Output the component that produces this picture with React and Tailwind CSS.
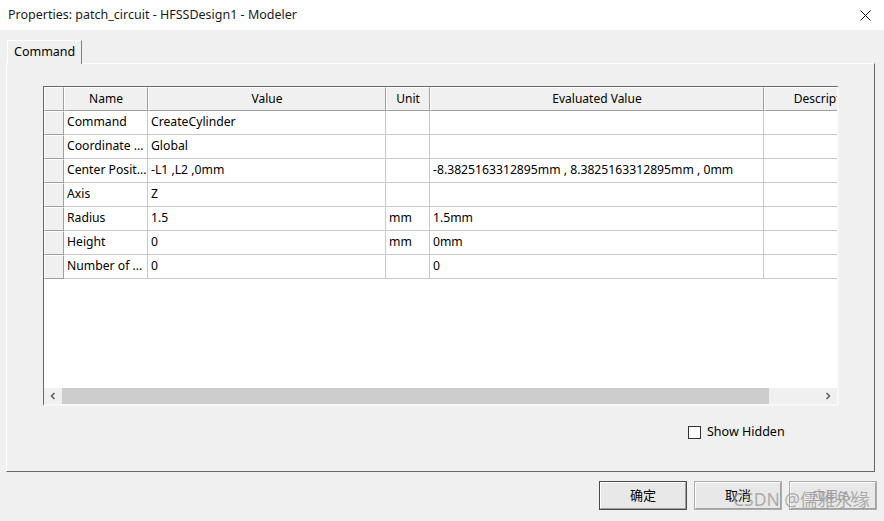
import React from "react";

const cols = [
  { key: "h", w: 20 },
  { key: "name", w: 84, label: "Name" },
  { key: "value", w: 238, label: "Value" },
  { key: "unit", w: 44, label: "Unit" },
  { key: "eval", w: 334, label: "Evaluated Value" },
  { key: "desc", w: 124, label: "Description" },
];

const rows = [
  { name: "Command", value: "CreateCylinder", unit: "", eval: "" },
  { name: "Coordinate ...", value: "Global", unit: "", eval: "" },
  {
    name: "Center Posit...",
    value: "-L1 ,L2 ,0mm",
    unit: "",
    eval: "-8.3825163312895mm , 8.3825163312895mm , 0mm",
  },
  { name: "Axis", value: "Z", unit: "", eval: "" },
  { name: "Radius", value: "1.5", unit: "mm", eval: "1.5mm" },
  { name: "Height", value: "0", unit: "mm", eval: "0mm" },
  { name: "Number of ...", value: "0", unit: "", eval: "0" },
];

function Chevron({ dir }) {
  return (
    <svg width="8" height="8" viewBox="0 0 8 8">
      {dir === "left" ? (
        <path d="M5.5 1 L2.5 4 L5.5 7" fill="none" stroke="#606060" strokeWidth="1.6" />
      ) : (
        <path d="M2.5 1 L5.5 4 L2.5 7" fill="none" stroke="#606060" strokeWidth="1.6" />
      )}
    </svg>
  );
}

function Button({ children, primary, disabled }) {
  return (
    <div
      className={`w-[88px] h-[29px] ${primary ? "border border-[#4a4a4a]" : "border border-[#adadad]"} bg-[#e8e8e8]`}
    >
      <div className="w-full h-full border-t border-l border-white border-r border-b border-r-[#a0a0a0] border-b-[#a0a0a0] flex items-center justify-center">
        <span className={`text-[13px] ${disabled ? "text-[#a0a0a0]" : "text-black"}`}>{children}</span>
      </div>
    </div>
  );
}

export default function App() {
  return (
    <div
      className="relative w-[884px] h-[521px] bg-[#f0f0f0] flex flex-col overflow-hidden text-black"
      style={{ fontFamily: '"Noto Sans", "Noto Sans CJK SC", sans-serif' }}
    >
      {/* Title bar */}
      <div className="h-[30px] bg-white flex items-center justify-between pl-[8px] pr-[13px] shrink-0">
        <span className="text-[12.5px] leading-none text-[#1a1a1a]">
          Properties: patch_circuit - HFSSDesign1 - Modeler
        </span>
        <svg width="11" height="11" viewBox="0 0 11 11">
          <path d="M0.5 0.5 L10.5 10.5 M10.5 0.5 L0.5 10.5" stroke="#111" strokeWidth="1" />
        </svg>
      </div>

      {/* Tab strip */}
      <div className="pl-[7px] pt-[10px] shrink-0">
        <div className="w-[75px] h-[24px] border-t border-l border-white border-r border-r-[#808080] flex items-center pl-[6px] relative z-10 -mb-[1px] bg-[#f0f0f0]">
          <span className="text-[12.5px] leading-none">Command</span>
        </div>
      </div>

      {/* Panel */}
      <div className="ml-[6px] w-[869px] h-[409px] border-t border-l border-white border-r border-b border-r-[#696969] border-b-[#696969] shrink-0 flex flex-col pl-[36px] pt-[22px]">
        {/* Grid box */}
        <div className="w-[796px] h-[320px] border-t border-l border-[#696969] border-r-2 border-b-2 border-r-[#f8f8f8] border-b-[#f8f8f8] flex flex-col">
          <div className="flex-1 bg-white overflow-hidden">
            <div className="flex w-max h-[24px]">
              {cols.map((c) => (
                <div
                  key={c.key}
                  style={{ width: c.w }}
                  className="shrink-0 h-full bg-[#f0f0f0] border-t border-l border-white border-r border-b border-r-[#a0a0a0] border-b-[#a0a0a0] flex items-center justify-center overflow-hidden"
                >
                  <span className="text-[12px] leading-none whitespace-nowrap">{c.label}</span>
                </div>
              ))}
            </div>
            {rows.map((r) => (
              <div key={r.name} className="flex w-max h-[24px]">
                {cols.map((c) =>
                  c.key === "h" ? (
                    <div
                      key={c.key}
                      style={{ width: c.w }}
                      className="shrink-0 h-full bg-[#f0f0f0] border-t border-l border-white border-r border-b border-r-[#a0a0a0] border-b-[#a0a0a0]"
                    />
                  ) : (
                    <div
                      key={c.key}
                      style={{ width: c.w }}
                      className="shrink-0 h-full border-r border-b border-[#c8c8c8] flex items-center pl-[3px] overflow-hidden"
                    >
                      <span className="text-[12.2px] leading-none whitespace-nowrap">{r[c.key] || ""}</span>
                    </div>
                  )
                )}
              </div>
            ))}
          </div>
          {/* Horizontal scrollbar */}
          <div className="h-[16px] flex bg-[#f0f0f0] shrink-0">
            <div className="w-[18px] h-full flex items-center justify-center">
              <Chevron dir="left" />
            </div>
            <div className="w-[707px] h-full bg-[#cdcdcd]" />
            <div className="flex-1" />
            <div className="w-[18px] h-full flex items-center justify-center">
              <Chevron dir="right" />
            </div>
          </div>
        </div>

        {/* Show Hidden */}
        <div className="flex items-center mt-[20px] ml-[645px]">
          <div className="w-[13px] h-[13px] bg-white border border-[#333]" />
          <span className="ml-[6px] text-[12.5px] leading-none">Show Hidden</span>
        </div>
      </div>

      {/* Buttons */}
      <div className="flex justify-end gap-[7px] pr-[7px] mt-[9px]">
        <Button primary>确定</Button>
        <Button>取消</Button>
        <Button disabled>应用(A)</Button>
      </div>

      {/* Watermark */}
      <div className="absolute left-[733px] top-[491px] text-[17.5px] leading-none text-[#9a9a9a]/80 whitespace-nowrap pointer-events-none">
        CSDN @儒雅永缘
      </div>
    </div>
  );
}
